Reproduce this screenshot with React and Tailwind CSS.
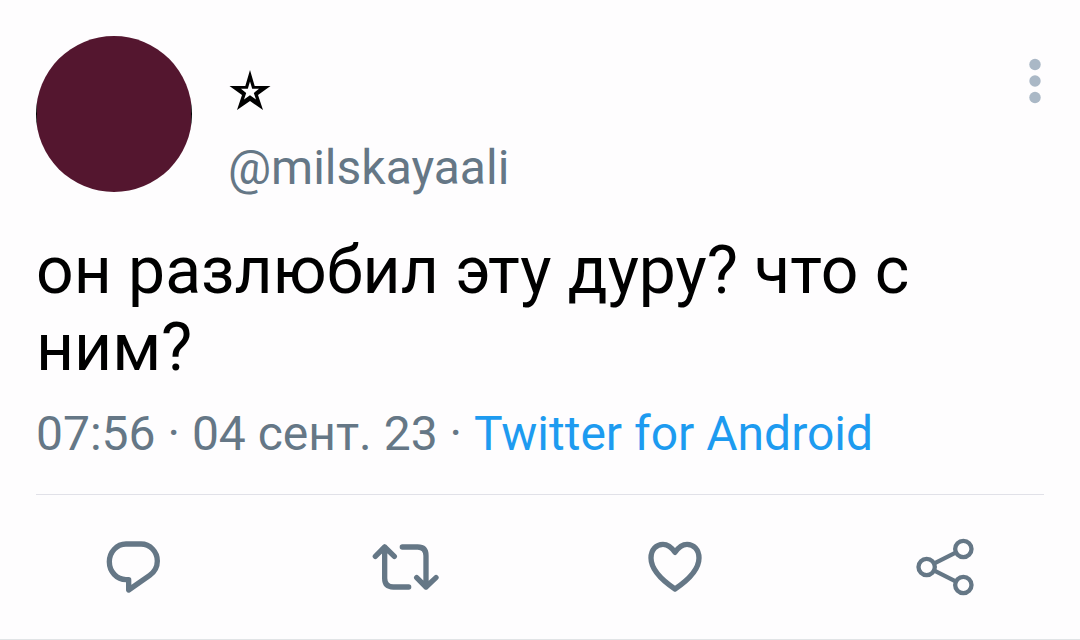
import React from "react";

function Action({ label, children }) {
  return (
    <button type="button" aria-label={label} className="flex h-20 items-center justify-center text-[#657786]">
      <svg
        className="h-20 w-[90px]"
        viewBox="0 6 270 240"
        fill="none"
        stroke="currentColor"
        strokeWidth="16"
        strokeLinecap="round"
        strokeLinejoin="round"
      >
        {children}
      </svg>
    </button>
  );
}

export default function App() {
  return (
    <main className="min-h-screen bg-[#fefdfe] font-['Roboto',sans-serif]">
      <article className="border-b border-[#e1e4e6] pt-9">
        <header className="flex items-start px-9">
          <div className="size-39 shrink-0 rounded-full bg-[linear-gradient(to_right,#000_1px,#54162f_1px,#54162f_calc(100%-1px),#000_calc(100%-1px))]" />
          <div className="ml-9 flex-1 pt-6">
            <h1 className="flex h-14 items-center">
              <svg role="img" aria-label="☆" className="size-11" viewBox="0 0 44 44" fill="#000" fillRule="evenodd">
                <path d="M22 4L26.7 20H42.5L30 29L35 44L22 35L9 44L14 29L1.5 20H17.3ZM22 15.5L24.2 22.8H31L25.8 27L28 33.5L22 29.3L16 33.5L18.2 27L13 22.8H19.8Z" />
              </svg>
            </h1>
            <p className="mt-6 text-[48px] leading-14 text-[#657786]">@milskayaali</p>
          </div>
          <button type="button" aria-label="More" className="mt-5 text-[#aab8c6]">
            <svg className="h-13 w-4" viewBox="0 0 16 52" fill="currentColor">
              <circle cx="7" cy="8.5" r="5.7" />
              <circle cx="7" cy="25" r="5.7" />
              <circle cx="7" cy="41.5" r="5.7" />
            </svg>
          </button>
        </header>
        <p className="mt-9 px-9 text-[66px] leading-[77px] text-black">он разлюбил эту дуру? что с ним?</p>
        <p className="mt-5 px-9 text-[48px] leading-14 text-[#657786]">
          07:56 · 04 сент. 23 ·{" "}
          <a href="#source" className="text-[#1d9bf0]">
            Twitter for Android
          </a>
        </p>
        <hr className="mx-9 mt-8 border-[#e1e1e8]" />
        <div className="grid grid-cols-4 py-8">
          <Action label="Reply">
            <path d="M108 57H153A49 51 0 0 1 202 108C202 126 193 141 179 151L116 195V164H108A50 53.5 0 0 1 108 57Z" />
          </Action>
          <Action label="Retweet">
            <path d="M46 94L74 66L103 94M74 66V160Q74 186 100 186H146M127 66H173Q198 66 198 92V186M170 158L198 186L228 158" />
          </Action>
          <Action label="Like">
            <path d="M135 82C124 66 113 58 99 58C79 58 63 74 63 99C63 135 95 165 135 192C175 165 207 135 207 99C207 74 191 58 171 58C157 58 146 66 135 82Z" />
          </Action>
          <Action label="Share">
            <g strokeWidth="13">
              <circle cx="80" cy="126" r="24.5" />
              <circle cx="190" cy="72" r="24.5" />
              <circle cx="190" cy="180" r="24.5" />
              <path d="M103 115L167 83M103 137L167 169" />
            </g>
          </Action>
        </div>
      </article>
    </main>
  );
}
